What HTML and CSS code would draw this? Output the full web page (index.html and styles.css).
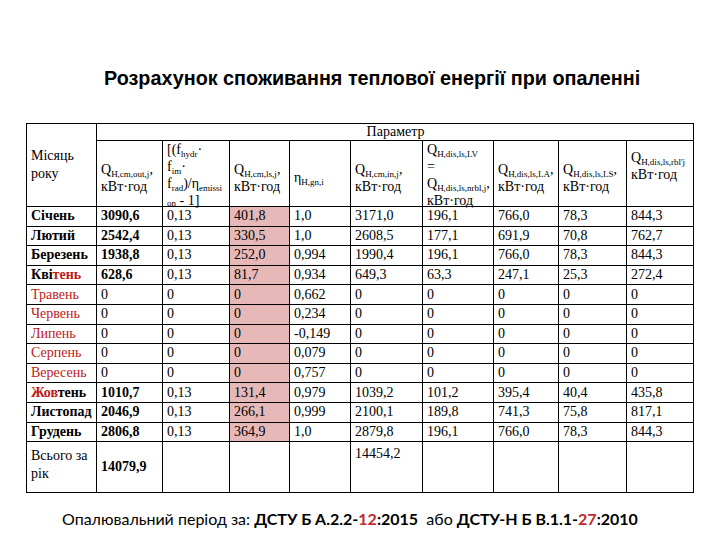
FILE: index.html
```html
<!DOCTYPE html>
<html lang="uk">
<head>
<meta charset="utf-8">
<link rel="stylesheet" href="styles.css">
</head>
<body>
<div class="page">
  <h1 class="title">Розрахунок споживання теплової енергії при опаленні</h1>
  <table class="grid">
    <colgroup>
      <col class="c1"><col class="c2"><col class="c3"><col class="c4"><col class="c5">
      <col class="c6"><col class="c7"><col class="c8"><col class="c9"><col class="c10">
    </colgroup>
    <thead>
      <tr class="h1row">
        <td rowspan="2" class="month-head">Місяць<br>року</td>
        <td colspan="9" class="param">Параметр</td>
      </tr>
      <tr class="h2row">
        <td>Q<sub>H,cm,out,j</sub>,<br>кВт·год</td>
        <td class="top"><div class="clip">[(f<sub>hydr</sub>·<br>f<sub>im</sub>·<br>f<sub>rad</sub>)/η<sub>emissi</sub><br><sub class="on">on</sub> - 1]</div></td>
        <td>Q<sub>H,cm,ls,j</sub>,<br>кВт·год</td>
        <td>η<sub>H,gn,i</sub></td>
        <td>Q<sub>H,cm,in,j</sub>,<br>кВт·год</td>
        <td class="full"><div class="clip">Q<sub>H,dis,ls,LV</sub><br>=<br>Q<sub>H,dis,ls,nrbl,j</sub>,<br>кВт·год</div></td>
        <td>Q<sub>H,dis,ls,LA</sub>,<br>кВт·год</td>
        <td>Q<sub>H,dis,ls,LS</sub>,<br>кВт·год</td>
        <td class="high">Q<sub>H,dis,ls,rbl'j</sub><br>кВт·год</td>
      </tr>
    </thead>
    <tbody>
      <tr><td class="m b">Січень</td><td class="b">3090,6</td><td>0,13</td><td class="pink">401,8</td><td>1,0</td><td>3171,0</td><td>196,1</td><td>766,0</td><td>78,3</td><td>844,3</td></tr>
      <tr><td class="m b">Лютий</td><td class="b">2542,4</td><td>0,13</td><td class="pink">330,5</td><td>1,0</td><td>2608,5</td><td>177,1</td><td>691,9</td><td>70,8</td><td>762,7</td></tr>
      <tr><td class="m b">Березень</td><td class="b">1938,8</td><td>0,13</td><td class="pink">252,0</td><td>0,994</td><td>1990,4</td><td>196,1</td><td>766,0</td><td>78,3</td><td>844,3</td></tr>
      <tr><td class="m b">Кві<span class="red">тень</span></td><td class="b">628,6</td><td>0,13</td><td class="pink">81,7</td><td>0,934</td><td>649,3</td><td>63,3</td><td>247,1</td><td>25,3</td><td>272,4</td></tr>
      <tr><td class="m red">Травень</td><td>0</td><td>0</td><td class="pink">0</td><td>0,662</td><td>0</td><td>0</td><td>0</td><td>0</td><td>0</td></tr>
      <tr><td class="m red">Червень</td><td>0</td><td>0</td><td class="pink">0</td><td>0,234</td><td>0</td><td>0</td><td>0</td><td>0</td><td>0</td></tr>
      <tr><td class="m red">Липень</td><td>0</td><td>0</td><td class="pink">0</td><td>-0,149</td><td>0</td><td>0</td><td>0</td><td>0</td><td>0</td></tr>
      <tr><td class="m red">Серпень</td><td>0</td><td>0</td><td class="pink">0</td><td>0,079</td><td>0</td><td>0</td><td>0</td><td>0</td><td>0</td></tr>
      <tr><td class="m red">Вересень</td><td>0</td><td>0</td><td class="pink">0</td><td>0,757</td><td>0</td><td>0</td><td>0</td><td>0</td><td>0</td></tr>
      <tr><td class="m b"><span class="red">Жов</span>тень</td><td class="b">1010,7</td><td>0,13</td><td class="pink">131,4</td><td>0,979</td><td>1039,2</td><td>101,2</td><td>395,4</td><td>40,4</td><td>435,8</td></tr>
      <tr><td class="m b">Листопад</td><td class="b">2046,9</td><td>0,13</td><td class="pink">266,1</td><td>0,999</td><td>2100,1</td><td>189,8</td><td>741,3</td><td>75,8</td><td>817,1</td></tr>
      <tr><td class="m b">Грудень</td><td class="b">2806,8</td><td>0,13</td><td class="pink">364,9</td><td>1,0</td><td>2879,8</td><td>196,1</td><td>766,0</td><td>78,3</td><td>844,3</td></tr>
      <tr class="total">
        <td class="tlabel">Всього за<br>рік</td>
        <td class="b mid">14079,9</td>
        <td></td><td></td><td></td>
        <td class="tsum">14454,2</td>
        <td></td><td></td><td></td><td></td>
      </tr>
    </tbody>
  </table>
  <p class="note">Опалювальний період за: <b>ДСТУ Б А.2.2-<span class="dred">12</span>:2015</b>&nbsp; або <b>ДСТУ-Н Б В.1.1-<span class="dred">27</span>:2010</b></p>
</div>
</body>
</html>
```

FILE: styles.css
```css
html, body {
  margin: 0;
  padding: 0;
  background: #ffffff;
}
.page {
  width: 720px;
  height: 540px;
  overflow: hidden;
  padding-top: 1px;
  box-sizing: border-box;
}
.title {
  margin: 66px 0 0 104px;
  font-family: "Liberation Sans", Arial, sans-serif;
  font-weight: bold;
  font-size: 19.8px;
  line-height: 22px;
  color: #000;
  white-space: nowrap;
}
.grid {
  margin: 34px 0 0 26px;
  width: 667px;
  table-layout: fixed;
  border-collapse: collapse;
  font-family: "Liberation Serif", "Times New Roman", serif;
  font-size: 14px;
  color: #000;
}
.c1 { width: 70px; }
.c2 { width: 66px; }
.c3 { width: 67px; }
.c4 { width: 60px; }
.c5 { width: 61px; }
.c6 { width: 72px; }
.c7 { width: 71px; }
.c8 { width: 65px; }
.c9 { width: 68px; }
.c10 { width: 67px; }
.grid td {
  border: 1px solid #000;
  padding: 0 3px 0 4px;
  vertical-align: middle;
  text-align: left;
  line-height: 16px;
  white-space: nowrap;
  overflow: visible;
}
.h1row td { height: 16px; }
.param { text-align: center !important; }
.h2row td { height: 57px; line-height: 17px; padding-top: 8px; }
.month-head { line-height: 18px !important; padding-top: 0 !important; }
.grid sub {
  font-size: 9px;
  line-height: 0;
  vertical-align: -3px;
}
.clip {
  height: 56px;
  overflow: visible;
}
.grid td.top {
  vertical-align: top;
  padding-top: 0;
  line-height: 17px;
}
.grid td.top sub.on { vertical-align: -1px; }
.grid td.full { vertical-align: top; line-height: 17px; padding-top: 0; }
.grid td.high { vertical-align: top; padding-top: 8px; }
tbody tr td { height: 18.6px; }
.b { font-weight: bold; }
.red { color: #c01818; }
.pink { background: #e6b8b7; }
.grid tr.total td { height: 45px; }
.grid td.tlabel { vertical-align: top; padding-top: 5px; line-height: 18px; white-space: normal; }
.grid td.tsum { vertical-align: top; padding-top: 4px; }
.grid td.mid { vertical-align: middle; }
.note {
  margin: 16px 0 0 62px;
  font-family: Lato, "Open Sans", sans-serif;
  font-size: 16px;
  line-height: 20px;
  color: #000;
  white-space: nowrap;
}
.note b { font-weight: bold; }
.dred { color: #c0282d; }
```
